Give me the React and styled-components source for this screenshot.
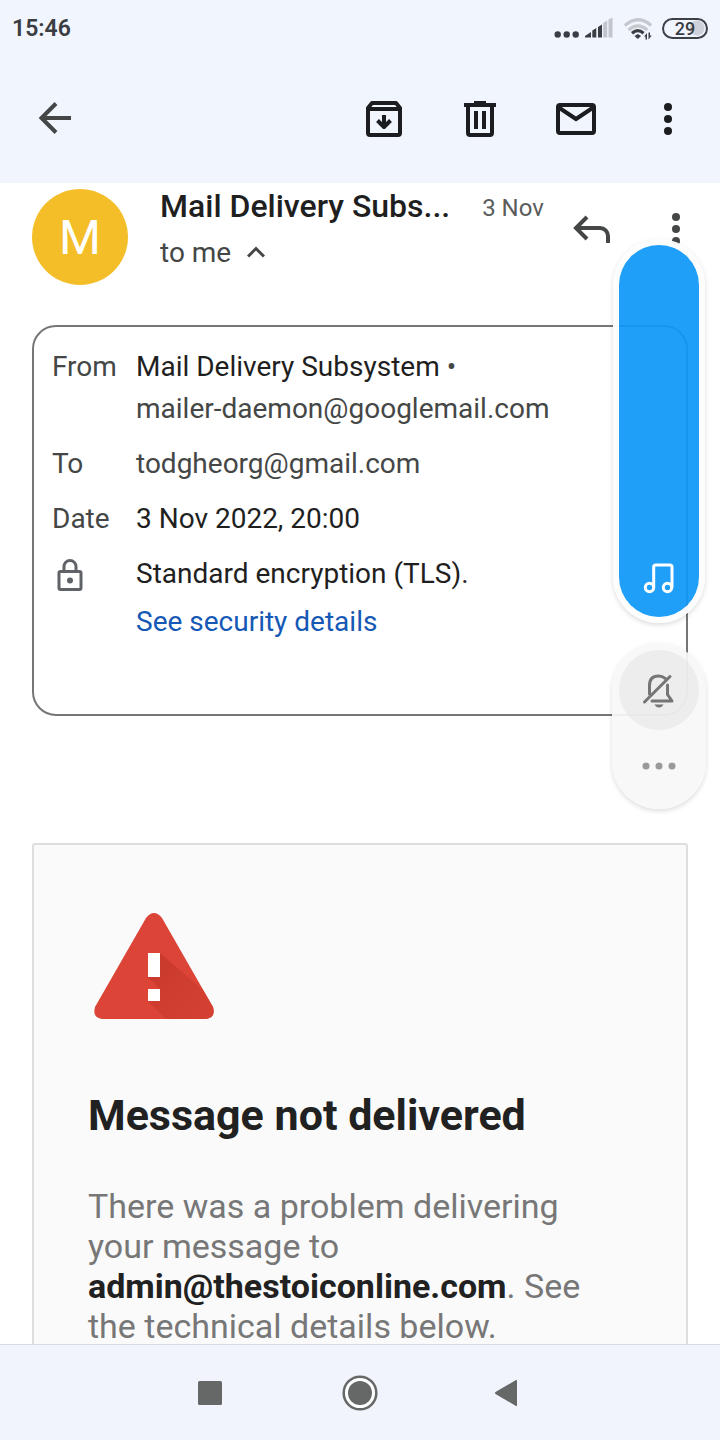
import React from 'react';
import styled, { createGlobalStyle } from 'styled-components';

const GlobalStyle = createGlobalStyle`
  * {
    box-sizing: border-box;
  }
  body {
    margin: 0;
    background: #fff;
    font-family: Roboto, 'Liberation Sans', sans-serif;
    color: #1f1f1f;
  }
`;
const Screen = styled.div`
  position: relative;
  display: flex;
  flex-direction: column;
  height: 100vh;
  overflow: hidden;
`;
const TopArea = styled.header`
  flex: none;
  background: #f1f5fd;
`;
const StatusBar = styled.div`
  display: flex;
  align-items: center;
  justify-content: space-between;
  height: 56px;
  padding: 0 12px;
`;
const Clock = styled.span`
  font-size: 23px;
  font-weight: 600;
  color: #3a3d42;
`;
const StatusIcons = styled.div`
  display: flex;
  align-items: center;
  height: 24px;
`;
const Battery = styled.span`
  width: 46px;
  height: 21px;
  margin-left: 10px;
  border: 2px solid #3d4045;
  border-radius: 11px;
  background: radial-gradient(circle at 33px 8px, #cfd2d8 7px, transparent 8px);
  color: #3a3d42;
  font-size: 18px;
  font-weight: 500;
  line-height: 17px;
  text-align: center;
`;
const Toolbar = styled.div`
  display: flex;
  align-items: center;
  justify-content: space-between;
  padding: 39px 32px 40px;
`;
const ToolbarActions = styled.div`
  display: flex;
  gap: 48px;
`;
const IconButton = styled.button`
  display: flex;
  align-items: center;
  justify-content: center;
  width: ${props => props.$width || 48}px;
  height: 48px;
  padding: 0;
  border: 0;
  background: none;
  color: ${props => props.$color || '#1b1d20'};
`;
const Message = styled.main`
  flex: 1;
  min-height: 0;
  padding: 6px 32px 0;
  overflow: hidden;
`;
const SenderRow = styled.div`
  display: flex;
  align-items: flex-start;
`;
const Avatar = styled.div`
  flex: none;
  width: 96px;
  height: 96px;
  margin-right: 32px;
  border-radius: 50%;
  background: #f4be29;
  color: #fff;
  font-size: 48px;
  line-height: 98px;
  text-align: center;
`;
const SenderText = styled.div`
  flex: 1;
`;
const SenderLine = styled.div`
  display: flex;
  align-items: center;
  gap: 32px;
  height: 34px;
  white-space: nowrap;
`;
const SenderName = styled.h1`
  margin: 0;
  font-size: 32px;
  font-weight: 500;
  line-height: 34px;
`;
const SentDate = styled.span`
  padding-top: 4px;
  font-size: 24px;
  color: #5a5d5c;
`;
const Recipient = styled.button`
  display: flex;
  align-items: center;
  gap: 16px;
  height: 32px;
  margin-top: 13px;
  padding: 0;
  border: 0;
  background: none;
  color: #444746;
  font: inherit;
  font-size: 28px;
`;
const SenderActions = styled.div`
  display: flex;
  flex: none;
  gap: 40px;
  margin: 16px -8px 0 0;
`;
const Details = styled.dl`
  display: grid;
  grid-template-columns: 84px 1fr;
  row-gap: 13px;
  margin: 40px 0 0;
  padding: 19px 18px 71px;
  border: 2px solid #747775;
  border-radius: 24px;
  font-size: 28px;
  line-height: 42px;
`;
const Term = styled.dt`
  display: flex;
  align-items: flex-start;
  color: #444746;
`;
const Value = styled.dd`
  margin: 0;
  color: ${props => (props.$muted ? '#444746' : '#1f1f1f')};
`;
const Muted = styled.span`
  color: #444746;
`;
const SecurityLink = styled.a`
  display: block;
  width: fit-content;
  margin-top: 6px;
  color: #1558b5;
  text-decoration: none;
`;
const Notice = styled.section`
  min-height: 640px;
  margin-top: 127px;
  padding: 60px 54px;
  border: 2px solid #dcdddd;
  border-radius: 3px;
  background: #fafafa;
`;
const NoticeTitle = styled.h2`
  margin: 60px 0 0;
  font-size: 43px;
  font-weight: 700;
  line-height: 60px;
  color: #212121;
`;
const NoticeText = styled.p`
  margin: 41px 0 0;
  padding-right: 24px;
  font-size: 34px;
  line-height: 40px;
  color: #777;

  b {
    color: #212121;
  }
`;
const VolumePanel = styled.aside`
  position: absolute;
  top: 239px;
  right: 14px;
  display: flex;
  flex-direction: column;
  align-items: center;
  gap: 20px;
`;
const Pill = styled.div`
  border-radius: 47px;
  box-shadow: 0 2px 5px rgba(0, 0, 0, 0.14);
`;
const VolumeTrack = styled(Pill)`
  display: grid;
  border: 6px solid rgba(253, 253, 254, 0.96);
`;
const VolumeSlider = styled.input`
  grid-area: 1 / 1;
  appearance: none;
  writing-mode: vertical-lr;
  direction: rtl;
  width: 80px;
  height: 372px;
  margin: 0;
  border-radius: 40px;
  background: rgba(14, 152, 247, 0.93);
  box-shadow: 0 0 0 2px #fdfdfe;

  &::-webkit-slider-thumb {
    appearance: none;
    width: 80px;
    height: 1px;
    background: transparent;
  }
`;
const TrackIcon = styled.span`
  grid-area: 1 / 1;
  align-self: end;
  justify-self: center;
  height: 55px;
  pointer-events: none;
`;
const SoundModes = styled(Pill)`
  display: flex;
  flex-direction: column;
  align-items: center;
  gap: 12px;
  padding: 7px 7px 19px;
  background: rgba(247, 247, 247, 0.93);
`;
const MuteButton = styled.button`
  display: flex;
  align-items: center;
  justify-content: center;
  width: 80px;
  height: 80px;
  padding: 0;
  border: 0;
  border-radius: 50%;
  background: rgba(226, 226, 226, 0.5);
  color: #757575;
`;
const SystemNav = styled.nav`
  display: flex;
  flex: none;
  align-items: center;
  justify-content: center;
  gap: 102px;
  height: 96px;
  border-top: 1px solid #d9dbe0;
  background: #f1f4fc;
`;

const SignalIcons = () => (
  <svg width="100" height="24" viewBox="552 15 100 24" fill="#3a3d42">
    <circle cx="557.7" cy="33.5" r="3.2" />
    <circle cx="566.7" cy="33.5" r="3.2" />
    <circle cx="575.7" cy="33.5" r="3.2" />
    <path d="M585 36.500V35l6-4V36.500zM592.300 36.500V29.500l4-2.500V36.500zM598 36.500V26l4-2.500V36.500z" />
    <path d="M603.200 36.500V22l4-2.500V36.500zM608.500 36.500V18.500l4-2V36.500z" fill="#c2c5cb" />
    <g fill="none" strokeWidth="3.200">
      <path d="M624.800 24.500Q638 13 651.200 24.500" stroke="#c5c8ce" />
      <path d="M628.500 29Q638 20.800 647.300 29" stroke="#c5c8ce" />
      <path d="M632 32.200Q637.800 27 643.600 32.200" stroke="#3a3d42" />
    </g>
    <path d="M634.500 35l3.300-2 3.300 2-3.300 3zM644 35.500l3-3.500V38.500h-1.500v-3zM648.500 31.500h1.500v3h1.700l-3.200 4z" />
  </svg>
);

const StrokeIcon = ({ children, size = 48, width = 4 }) => (
  <svg width={size} height={size} viewBox={`0 0 ${size} ${size}`} fill="none" stroke="currentColor" strokeWidth={width}>
    {children}
  </svg>
);

const MoreIcon = () => (
  <svg width="40" height="48" viewBox="0 0 40 48" fill="currentColor">
    <circle cx="20" cy="12" r="4" />
    <circle cx="20" cy="24" r="4" />
    <circle cx="20" cy="36" r="4" />
  </svg>
);

const WarningIcon = () => (
  <svg width="132" height="120" viewBox="88 905 132 120" display="block">
    <defs>
      <linearGradient id="shade" x1="0" y1="0" x2="1" y2="1">
        <stop offset="0" stopColor="#c8392b" />
        <stop offset="1" stopColor="#d54133" />
      </linearGradient>
    </defs>
    <path d="M146 918Q154 908 162 918L213 1007Q216 1018 205 1019H103Q92 1018 95 1007Z" fill="#db4437" />
    <path d="M160 953L203 990 213 1007Q216 1018 205 1019H166L148 1001V989H160L148 977H160Z" fill="url(#shade)" />
    <path d="M148 953h12v24h-12zM148 989h12v12h-12z" fill="#fff" />
  </svg>
);

const App = () => (
  <Screen>
    <GlobalStyle />
    <TopArea>
      <StatusBar>
        <Clock>15:46</Clock>
        <StatusIcons>
          <SignalIcons />
          <Battery>29</Battery>
        </StatusIcons>
      </StatusBar>
      <Toolbar>
        <IconButton aria-label="Back" $color="#444746">
          <StrokeIcon>
            <path d="M39 23H9M24 8.500L9.500 23 24 37.500" />
          </StrokeIcon>
        </IconButton>
        <ToolbarActions>
          <IconButton aria-label="Archive">
            <StrokeIcon>
              <path d="M8 13l4-5h24l4 5v25a2 2 0 0 1-2 2H10a2 2 0 0 1-2-2zM8 14h32M24 20v11M17.500 25.500l6.500 6.500 6.500-6.500" strokeLinejoin="round" />
            </StrokeIcon>
          </IconButton>
          <IconButton aria-label="Delete">
            <StrokeIcon>
              <path d="M8 10h32M18 8h12M12 10v28a2 2 0 0 0 2 2h20a2 2 0 0 0 2-2V10M20 16v18M28 16v18" />
            </StrokeIcon>
          </IconButton>
          <IconButton aria-label="Mark as unread">
            <StrokeIcon>
              <rect x="6" y="10" width="36" height="28" rx="2" />
              <path d="M6 12l18 12 18-12" />
            </StrokeIcon>
          </IconButton>
          <IconButton aria-label="More options" $width={40}>
            <MoreIcon />
          </IconButton>
        </ToolbarActions>
      </Toolbar>
    </TopArea>

    <Message>
      <SenderRow>
        <Avatar>M</Avatar>
        <SenderText>
          <SenderLine>
            <SenderName>Mail Delivery Subs...</SenderName>
            <SentDate>3 Nov</SentDate>
          </SenderLine>
          <Recipient>
            to me
            <svg width="18" height="12" viewBox="0 0 18 12" fill="none" stroke="currentColor" strokeWidth="3">
              <path d="M1 10.500l8-8 8 8" />
            </svg>
          </Recipient>
        </SenderText>
        <SenderActions>
          <IconButton aria-label="Reply" $color="#444746">
            <StrokeIcon>
              <path d="M19 12L8 23l11 11M8 23h24a8 8 0 0 1 8 8v7" />
            </StrokeIcon>
          </IconButton>
          <IconButton aria-label="Message options" $color="#444746" $width={40}>
            <MoreIcon />
          </IconButton>
        </SenderActions>
      </SenderRow>

      <Details>
        <Term>From</Term>
        <Value>
          Mail Delivery Subsystem <Muted>•</Muted>
          <br />
          <Muted>mailer-daemon@googlemail.com</Muted>
        </Value>
        <Term>To</Term>
        <Value $muted>todgheorg@gmail.com</Value>
        <Term>Date</Term>
        <Value>3 Nov 2022, 20:00</Value>
        <Term>
          <svg width="36" height="44" viewBox="0 0 36 44" fill="none" stroke="#5f6368" strokeWidth="3" role="img" aria-label="Encryption">
            <rect x="7" y="18.500" width="22" height="18" rx="1.500" />
            <path d="M12 18v-4.500a6 6 0 0 1 12 0V18" />
            <circle cx="18" cy="27.500" r="3" fill="#5f6368" stroke="none" />
          </svg>
        </Term>
        <Value>
          Standard encryption (TLS).
          <SecurityLink href="#security">See security details</SecurityLink>
        </Value>
      </Details>

      <Notice>
        <WarningIcon />
        <NoticeTitle>Message not delivered</NoticeTitle>
        <NoticeText>
          There was a problem delivering your message to <b>admin@thestoiconline.com</b>. See the technical details below.
        </NoticeText>
      </Notice>
    </Message>

    <VolumePanel>
      <VolumeTrack>
        <VolumeSlider type="range" min="0" max="100" defaultValue="100" aria-label="Media volume" />
        <TrackIcon>
          <svg width="32" height="32" viewBox="0 0 32 32" fill="none" stroke="#fff" strokeWidth="3">
            <circle cx="6.500" cy="25.500" r="4.200" />
            <circle cx="24.500" cy="25.500" r="4.200" />
            <path d="M10.700 25.500V5a2 2 0 0 1 2-2H27a2 2 0 0 1 2 2v20.500" />
          </svg>
        </TrackIcon>
      </VolumeTrack>
      <SoundModes>
        <MuteButton aria-label="Silent mode">
          <StrokeIcon size={40} width={3}>
            <path d="M10.500 24V15.500C10.500 8 15 6 19.500 6c3 0 5 1 7 2.700M5.500 32L31 6.500M13 31h20l-4.500-6.500V15" strokeLinecap="round" strokeLinejoin="round" />
            <path d="M15.500 34.500h9q-1.500 3-4.500 3t-4.500-3z" fill="currentColor" stroke="none" />
          </StrokeIcon>
        </MuteButton>
        <IconButton aria-label="More sound settings" $color="#9a9a9a">
          <svg width="34" height="8" viewBox="0 0 34 8" fill="currentColor">
            <circle cx="4" cy="4" r="3.500" />
            <circle cx="17" cy="4" r="3.500" />
            <circle cx="30" cy="4" r="3.500" />
          </svg>
        </IconButton>
      </SoundModes>
    </VolumePanel>

    <SystemNav>
      <IconButton aria-label="Recent apps" $color="#666867">
        <svg width="24" height="24" viewBox="0 0 24 24" fill="currentColor">
          <rect x="0" y="0" width="24" height="24" rx="1.500" />
        </svg>
      </IconButton>
      <IconButton aria-label="Home" $color="#666867">
        <svg width="36" height="36" viewBox="0 0 36 36">
          <circle cx="18" cy="18" r="16.300" fill="#fff" stroke="currentColor" strokeWidth="2.500" />
          <circle cx="18" cy="18" r="12" fill="currentColor" />
        </svg>
      </IconButton>
      <IconButton aria-label="Back to previous screen" $color="#666867">
        <svg width="32" height="28" viewBox="0 0 32 28" fill="currentColor">
          <path d="M22 1q1-.5 1 1v24q0 1.500-1 1L1.500 15q-1-1 0-2z" />
        </svg>
      </IconButton>
    </SystemNav>
  </Screen>
);

export default App;
